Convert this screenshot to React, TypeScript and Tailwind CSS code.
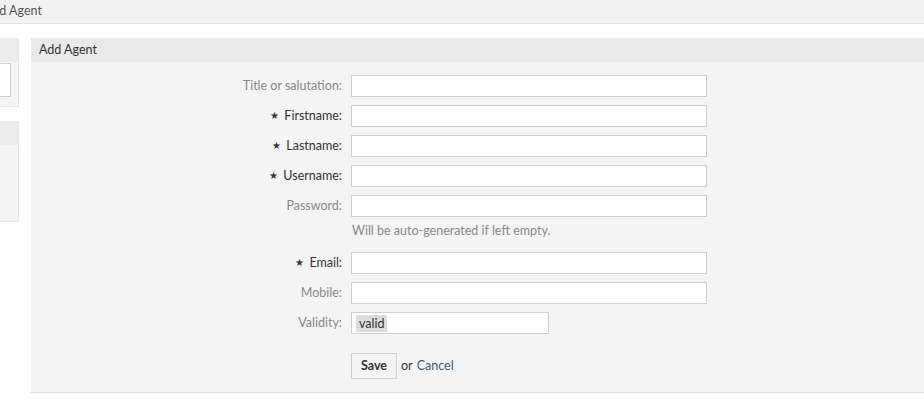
import React from "react";

const font = { fontFamily: "Lato, 'Liberation Sans', sans-serif" };

type Row = { label: string; req?: boolean; hint?: string; value?: string };

const rows: Row[] = [
  { label: "Title or salutation:" },
  { label: "Firstname:", req: true },
  { label: "Lastname:", req: true },
  { label: "Username:", req: true },
  { label: "Password:", hint: "Will be auto-generated if left empty." },
  { label: "Email:", req: true },
  { label: "Mobile:" },
  { label: "Validity:", value: "valid" },
];

export default function App() {
  return (
    <div className="w-[924px] h-[402px] bg-white overflow-hidden text-[12.5px]" style={font}>
      <div className="h-[24px] bg-[#f2f2f2] border-b border-[#e4e4e4] flex items-center">
        <span className="ml-[-16px] text-[#555]">Add Agent</span>
      </div>
      <div className="flex pt-[14px] gap-[12px]">
        <div className="w-[19px] flex flex-col gap-[14px] shrink-0">
          <div className="h-[69px] bg-[#f4f4f4] border-r border-b border-[#e6e6e6] flex flex-col">
            <div className="h-[24px] bg-[#ebebeb]" />
            <div className="mt-[1px] w-[11px] h-[34px] bg-white border border-l-0 border-[#cfcfcf]" />
          </div>
          <div className="h-[101px] bg-[#f4f4f4] border-r border-b border-[#e6e6e6]">
            <div className="h-[24px] bg-[#ebebeb]" />
          </div>
        </div>
        <div className="flex-1 flex flex-col">
          <div className="h-[24px] bg-[#e9e9e9] flex items-center pl-[8px] text-[#333]">Add Agent</div>
          <div className="h-[331px] bg-[#f4f4f4] border-b border-[#dedede] pt-[13px]">
            <div className="flex flex-col">
              {rows.map((r) => (
                <div key={r.label} className="flex flex-col">
                  <div className="flex items-center h-[22px] mb-[8px]">
                    <div className={`w-[311px] text-right ${r.req ? "text-[#333]" : "text-[#888]"}`}>
                      {r.req && <span className="text-[10px] mr-[5px] relative top-[-1px]">★</span>}
                      {r.label}
                    </div>
                    <div className="ml-[9px]">
                      {r.value ? (
                        <div className="w-[198px] h-[22px] bg-white border border-[#cfcfcf] flex items-center px-[4px]">
                          <span className="bg-[#dcdcdc] text-[#333] px-[3px] leading-[17px]">{r.value}</span>
                        </div>
                      ) : (
                        <div className="w-[356px] h-[22px] bg-white border border-[#cfcfcf]" />
                      )}
                    </div>
                  </div>
                  {r.hint && (
                    <div className="pl-[321px] text-[#888] mt-[-3px] mb-[13px] h-[17px]">{r.hint}</div>
                  )}
                </div>
              ))}
              <div className="flex items-center pl-[320px] mt-[11px]">
                <button className="h-[26px] w-[46px] bg-[#f4f4f4] border border-[#cfcfcf] font-bold text-[#333]" style={font}>
                  Save
                </button>
                <span className="ml-[4px] text-[#333]">or</span>
                <span className="ml-[4px] text-[#3e5a72]">Cancel</span>
              </div>
            </div>
          </div>
        </div>
      </div>
    </div>
  );
}
